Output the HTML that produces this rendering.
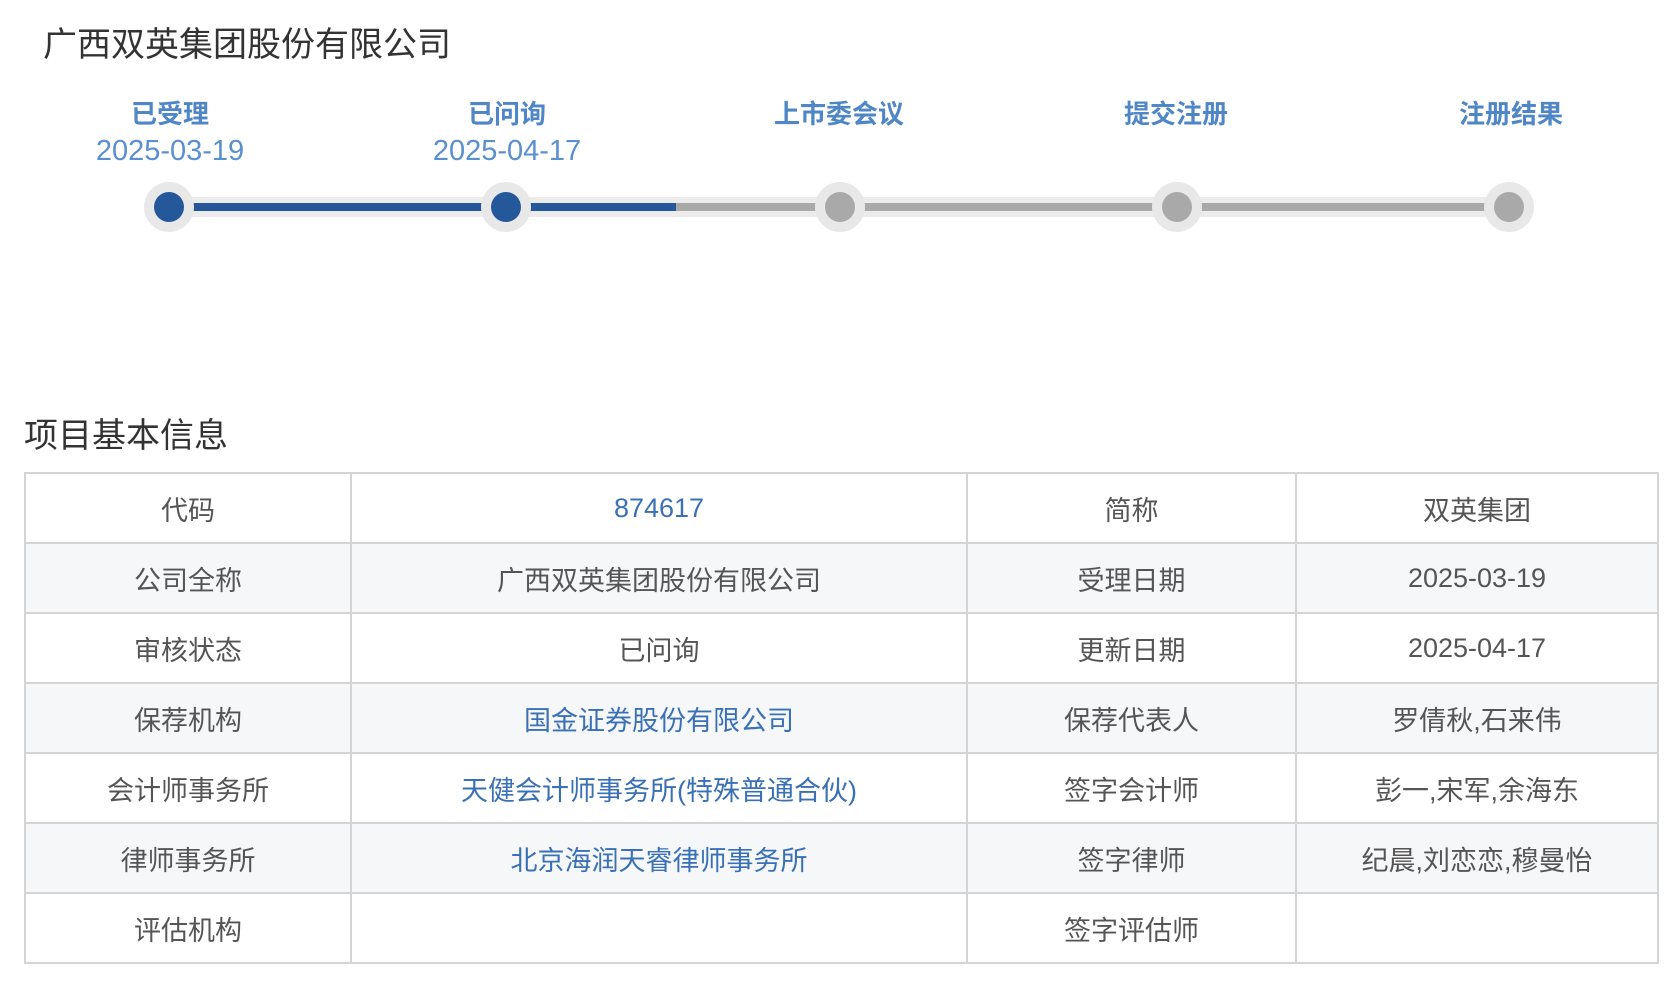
<!DOCTYPE html>
<html><head><meta charset="utf-8"><style>
body{margin:0;width:1680px;height:982px;background:#fff;font-family:"Liberation Sans","Noto Sans CJK SC",sans-serif;position:relative;overflow:hidden}
.t{position:absolute;color:#333;font-size:34px;white-space:nowrap}
.lab{position:absolute;width:300px;margin-left:-150px;text-align:center;color:#4f86c6;font-weight:bold;font-size:26px;top:94px}
.dt{position:absolute;width:300px;margin-left:-150px;text-align:center;color:#5a8fd0;font-size:29px;top:135px}
.halo{position:absolute;width:50px;height:50px;border-radius:50%;background:#e8e8e8;top:182px;margin-left:-25px}
.dot{position:absolute;width:30px;height:30px;border-radius:50%;top:192px;margin-left:-15px;background:#a9a9a9}
.b{background:#24589a}
table{position:absolute;left:24px;top:472px;width:1633px;table-layout:fixed;border-collapse:collapse;font-size:27px;color:#555}
td{border:2px solid #d4d4d4;height:68px;text-align:center;padding:0}
tr:nth-child(even) td{background:#f6f7f9}
a{color:#3a70b5;text-decoration:none}
</style></head><body>
<div class="t" style="left:43px;top:17px">广西双英集团股份有限公司</div>
<div style="position:absolute;left:169px;width:1340px;top:197px;height:20px;background:#ececec"></div>
<div style="position:absolute;left:169px;width:1340px;top:203px;height:8px;background:#a9a9a9"></div>
<div style="position:absolute;left:169px;width:507px;top:203px;height:8px;background:#24589a"></div>
<div class="halo" style="left:169px"></div><div class="dot b" style="left:169px"></div>
<div class="halo" style="left:506px"></div><div class="dot b" style="left:506px"></div>
<div class="halo" style="left:840px"></div><div class="dot" style="left:840px"></div>
<div class="halo" style="left:1177px"></div><div class="dot" style="left:1177px"></div>
<div class="halo" style="left:1509px"></div><div class="dot" style="left:1509px"></div>
<div class="lab" style="left:170px">已受理</div><div class="dt" style="left:170px">2025-03-19</div>
<div class="lab" style="left:507px">已问询</div><div class="dt" style="left:507px">2025-04-17</div>
<div class="lab" style="left:839px">上市委会议</div>
<div class="lab" style="left:1176px">提交注册</div>
<div class="lab" style="left:1511px">注册结果</div>
<div class="t" style="left:24px;top:408px;font-size:34px">项目基本信息</div>
<table>
<colgroup><col style="width:326px"><col style="width:616px"><col style="width:329px"><col style="width:362px"></colgroup>
<tr><td>代码</td><td><a>874617</a></td><td>简称</td><td>双英集团</td></tr>
<tr><td>公司全称</td><td>广西双英集团股份有限公司</td><td>受理日期</td><td>2025-03-19</td></tr>
<tr><td>审核状态</td><td>已问询</td><td>更新日期</td><td>2025-04-17</td></tr>
<tr><td>保荐机构</td><td><a>国金证券股份有限公司</a></td><td>保荐代表人</td><td>罗倩秋,石来伟</td></tr>
<tr><td>会计师事务所</td><td><a>天健会计师事务所(特殊普通合伙)</a></td><td>签字会计师</td><td>彭一,宋军,余海东</td></tr>
<tr><td>律师事务所</td><td><a>北京海润天睿律师事务所</a></td><td>签字律师</td><td>纪晨,刘恋恋,穆曼怡</td></tr>
<tr><td>评估机构</td><td></td><td>签字评估师</td><td></td></tr>
</table>
</body></html>
